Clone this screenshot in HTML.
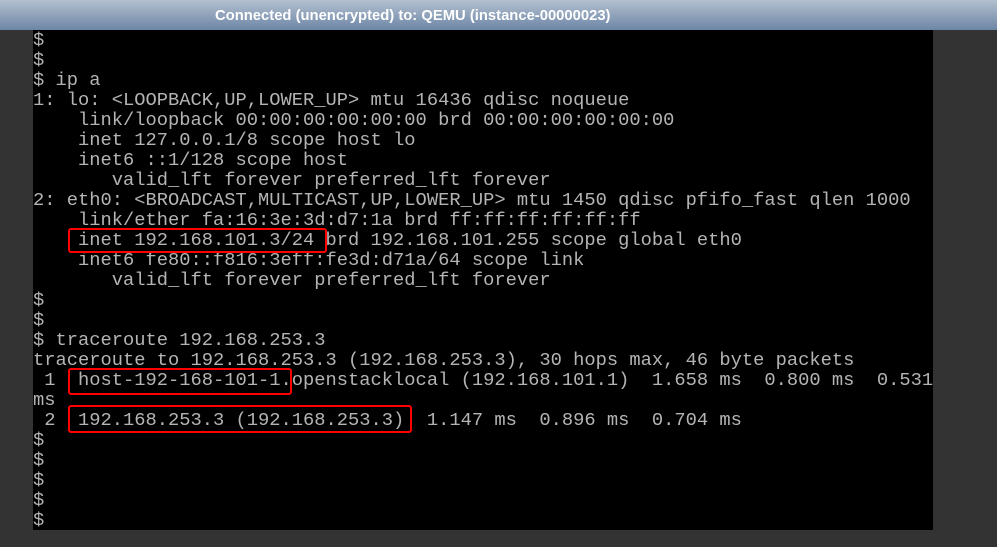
<!DOCTYPE html>
<html><head><meta charset="utf-8"><style>
html,body{margin:0;padding:0;}
body{width:997px;height:547px;background:#333;position:relative;overflow:hidden;}
#bar{position:absolute;left:0;top:0;width:997px;height:30px;background:linear-gradient(#b4c0d0,#6c86a6);}
#bar span{position:absolute;left:215px;top:0;color:#fff;font:bold 14.8px "Liberation Sans",sans-serif;line-height:32px;white-space:nowrap;}
#term{position:absolute;left:33px;top:30px;width:900px;height:500px;background:#000;}
pre{margin:0;position:absolute;left:33px;top:30px;font-family:"Liberation Mono",monospace;font-size:18.75px;line-height:20px;color:#b4b4b4;white-space:pre;}
.box{position:absolute;border:2.5px solid #f00;border-radius:3px;box-sizing:border-box;}
</style></head><body>
<div id="bar"><span>Connected (unencrypted) to: QEMU (instance-00000023)</span></div>
<div id="term"></div>
<pre>$
$
$ ip a
1: lo: &lt;LOOPBACK,UP,LOWER_UP&gt; mtu 16436 qdisc noqueue
    link/loopback 00:00:00:00:00:00 brd 00:00:00:00:00:00
    inet 127.0.0.1/8 scope host lo
    inet6 ::1/128 scope host
       valid_lft forever preferred_lft forever
2: eth0: &lt;BROADCAST,MULTICAST,UP,LOWER_UP&gt; mtu 1450 qdisc pfifo_fast qlen 1000
    link/ether fa:16:3e:3d:d7:1a brd ff:ff:ff:ff:ff:ff
    inet 192.168.101.3/24 brd 192.168.101.255 scope global eth0
    inet6 fe80::f816:3eff:fe3d:d71a/64 scope link
       valid_lft forever preferred_lft forever
$
$
$ traceroute 192.168.253.3
traceroute to 192.168.253.3 (192.168.253.3), 30 hops max, 46 byte packets
 1  host-192-168-101-1.openstacklocal (192.168.101.1)  1.658 ms  0.800 ms  0.531
ms
 2  192.168.253.3 (192.168.253.3)  1.147 ms  0.896 ms  0.704 ms
$
$
$
$
$</pre>
<div class="box" style="left:68px;top:228px;width:259px;height:25px"></div>
<div class="box" style="left:68px;top:368px;width:224px;height:27px"></div>
<div class="box" style="left:68px;top:405px;width:344px;height:28px"></div>
</body></html>
